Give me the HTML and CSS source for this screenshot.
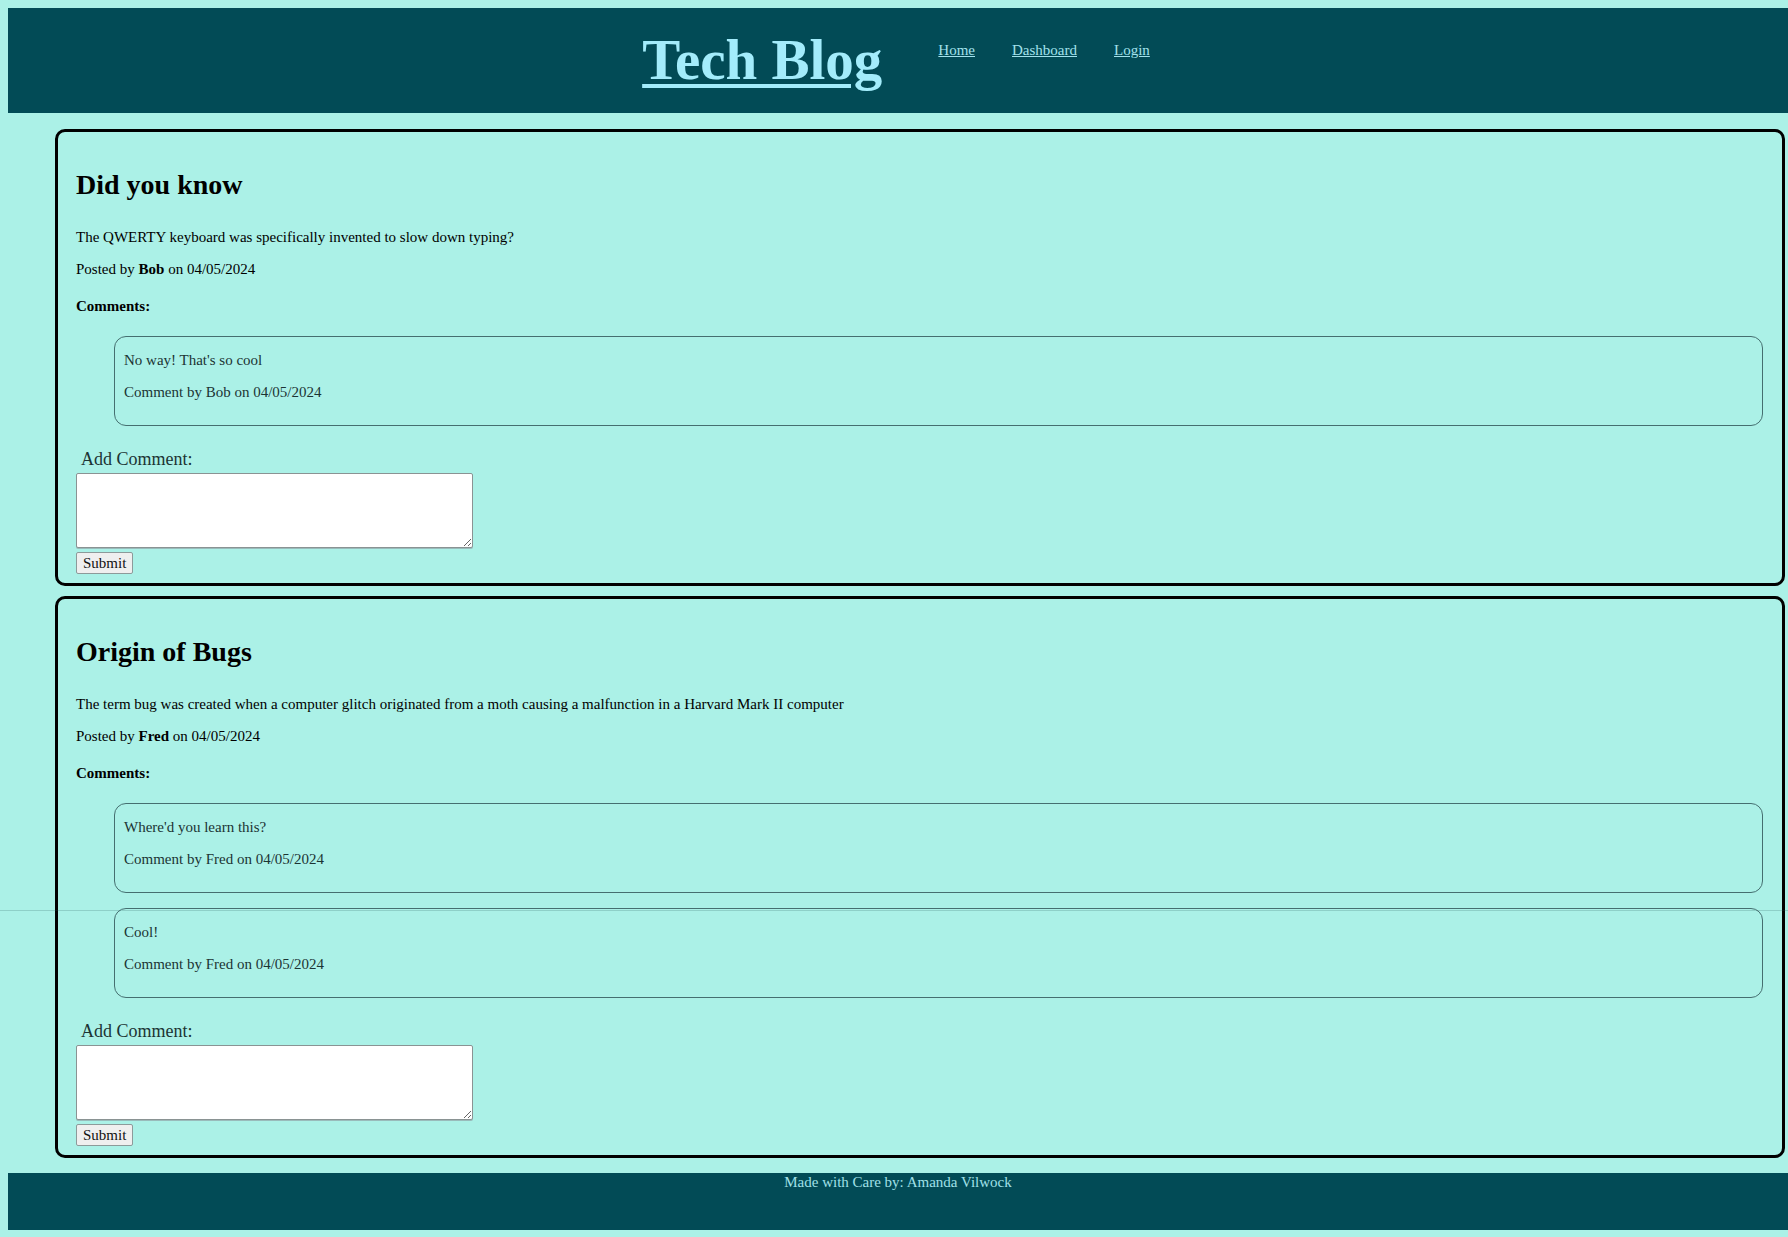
FILE: index.html
```html
<!DOCTYPE html>
<html lang="en">
<head>
<meta charset="utf-8">
<title>Tech Blog</title>
<link rel="stylesheet" href="styles.css">
</head>
<body>
<header class="site-header">
  <h1 class="site-title"><a href="#">Tech Blog</a></h1>
  <nav class="site-nav">
    <a href="#">Home</a>
    <a href="#">Dashboard</a>
    <a href="#">Login</a>
  </nav>
</header>
<main class="posts">
  <article class="post">
    <h2 class="post-title">Did you know</h2>
    <p class="post-body">The QWERTY keyboard was specifically invented to slow down typing?</p>
    <p class="post-meta">Posted by <strong>Bob</strong> on 04/05/2024</p>
    <h4 class="comments-heading">Comments:</h4>
    <ul class="comment-list">
      <li class="comment">
        <p>No way! That's so cool</p>
        <p>Comment by Bob on 04/05/2024</p>
      </li>
    </ul>
    <form class="comment-form">
      <label class="comment-label">Add Comment:</label>
      <textarea class="comment-input"></textarea>
      <button type="button" class="comment-submit">Submit</button>
    </form>
  </article>
  <article class="post">
    <h2 class="post-title">Origin of Bugs</h2>
    <p class="post-body">The term bug was created when a computer glitch originated from a moth causing a malfunction in a Harvard Mark II computer</p>
    <p class="post-meta">Posted by <strong>Fred</strong> on 04/05/2024</p>
    <h4 class="comments-heading">Comments:</h4>
    <ul class="comment-list">
      <li class="comment">
        <p>Where'd you learn this?</p>
        <p>Comment by Fred on 04/05/2024</p>
      </li>
      <li class="comment">
        <p>Cool!</p>
        <p>Comment by Fred on 04/05/2024</p>
      </li>
    </ul>
    <form class="comment-form">
      <label class="comment-label">Add Comment:</label>
      <textarea class="comment-input"></textarea>
      <button type="button" class="comment-submit">Submit</button>
    </form>
  </article>
</main>
<footer class="site-footer">Made with Care by: Amanda Vilwock</footer>
<div class="seam"></div>
</body>
</html>
```
FILE: styles.css
```css
html, body {
  background: #abf1e7;
}
body {
  margin: 8px 0 8px 8px;
  font-family: "Liberation Serif", "Times New Roman", serif;
  font-size: 15px;
  color: #000;
  overflow: hidden;
}

.site-header {
  background: #024b56;
  height: 105px;
  box-sizing: border-box;
  padding: 21px 4px 0 0;
  display: flex;
  justify-content: center;
  align-items: flex-start;
  gap: 56px;
}
.site-title {
  margin: 0;
  font-size: 57px;
  line-height: 62px;
  font-weight: bold;
}
.site-title a {
  color: #a3ecfb;
  text-decoration: underline;
  text-decoration-thickness: 4px;
  text-underline-offset: 5px;
}
.site-nav {
  margin-top: 13px;
  display: flex;
  gap: 37px;
  font-size: 15px;
}
.site-nav a {
  color: #a2e2ec;
  text-decoration: underline;
}

.posts {
  margin: 16px 3px 0 47px;
  display: flex;
  flex-direction: column;
  gap: 10px;
}
.post {
  border: 3px solid #000;
  border-radius: 10px;
  padding: 0 19px 9px 18px;
}
.post-title {
  font-size: 28px;
  line-height: 31px;
  margin: 37px 0 29px;
}
.post-body,
.post-meta {
  margin: 15px 0;
}
.comments-heading {
  font-size: 15px;
  margin: 20px 0 21px;
}
.comment-list {
  list-style: none;
  margin: 0 0 0 38px;
  padding: 0;
  display: flex;
  flex-direction: column;
  gap: 15px;
}
.comment {
  border: 1px solid #456f70;
  border-radius: 12px;
  padding: 0 9px 9px;
  color: #1c3434;
}
.comment p {
  margin: 15px 0;
}

.comment-form {
  margin-top: 23px;
  display: flex;
  flex-direction: column;
  align-items: flex-start;
}
.comment-label {
  font-size: 18px;
  padding-left: 5px;
  color: #1c3434;
}
.comment-input {
  margin-top: 3px;
  width: 397px;
  height: 75px;
  box-sizing: border-box;
  border: 1px solid #8a9393;
  border-radius: 2px;
  background: #fff;
  padding: 2px;
  box-shadow: 0 1px 0 #9bb;
}
.comment-submit {
  margin-top: 4px;
  font-family: "Liberation Serif", "Times New Roman", serif;
  font-size: 15px;
  color: #111;
  height: 22px;
  padding: 0 6px;
  border: 1px solid #8d9a9a;
  border-radius: 2px;
  background: #efefef;
}

.site-footer {
  margin-top: 15px;
  height: 57px;
  box-sizing: border-box;
  padding-top: 1px;
  background: #024b56;
  color: #a0e0e8;
  text-align: center;
  font-size: 15px;
  line-height: 17px;
}

.seam {
  position: absolute;
  top: 910px;
  left: 0;
  right: 0;
  height: 1px;
  background: rgba(40, 90, 90, 0.22);
  pointer-events: none;
}
```
